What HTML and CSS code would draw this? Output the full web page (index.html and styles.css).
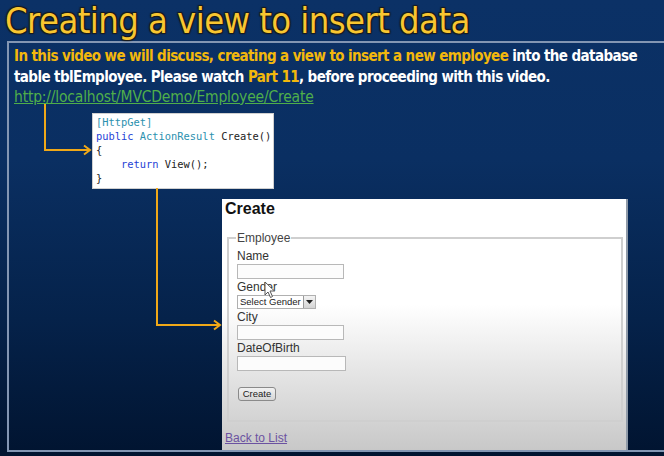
FILE: index.html
```html
<!DOCTYPE html>
<html>
<head>
<meta charset="utf-8">
<link rel="stylesheet" href="styles.css">
</head>
<body>
<h1 class="title">Creating a view to insert data</h1>
<div class="frame">
  <p class="intro"><span class="gold">In this video we will discuss, creating a view to insert a new employee</span> into the database<br>table tblEmployee. Please watch <span class="gold">Part 11</span>, before proceeding with this video.<br><a class="url" href="#">http://localhost/MVCDemo/Employee/Create</a></p>
  <div class="code"><div><span class="t">[HttpGet]</span></div><div><span class="k">public</span> <span class="t">ActionResult</span> Create()</div><div>{</div><div>    <span class="k">return</span> View();</div><div>}</div></div>
  <div class="browser">
    <h2 class="b-title">Create</h2>
    <fieldset class="fs">
      <legend class="lg">Employee</legend>
      <div class="lbl first">Name</div>
      <div class="inp"></div>
      <div class="lbl">Gender</div>
      <div class="sel"><span class="sel-txt">Select Gender</span><span class="sel-btn"><svg width="7" height="4" viewBox="0 0 7 4"><path d="M0 0H7L3.5 4Z" fill="#222"/></svg></span></div>
      <div class="lbl">City</div>
      <div class="inp"></div>
      <div class="lbl">DateOfBirth</div>
      <div class="inp wide"></div>
      <div class="btn">Create</div>
    </fieldset>
    <a class="back" href="#">Back to List</a>
  </div>
</div>
<svg class="wires" width="664" height="456" viewBox="0 0 664 456">
  <g fill="none" stroke="#f0a818" stroke-width="2">
    <path d="M45 104V150H89"/>
    <path d="M84 145.5L90 150L84 154.5"/>
    <path d="M157 188V325H219"/>
    <path d="M214 320.5L220 325L214 329.5"/>
  </g>
</svg>
<svg class="cursor" width="12" height="18" viewBox="0 0 12 18">
  <path d="M1 1V14L4 11L6.5 16.5L8.5 15.5L6 10H10.5Z" fill="#fff" stroke="#555" stroke-width="1"/>
</svg>
</body>
</html>
```
FILE: styles.css
```css
html, body {
  margin: 0;
  padding: 0;
}
body {
  width: 664px;
  height: 456px;
  overflow: hidden;
  position: relative;
  background: linear-gradient(180deg, #0b3166 0%, #0a2f62 35%, #05224a 70%, #011430 100%);
  font-family: "Liberation Sans", Arial, sans-serif;
}
.title {
  margin: 0;
  height: 41px;
  padding-left: 5px;
  font-family: "DejaVu Sans Condensed", "DejaVu Sans", sans-serif;
  font-stretch: condensed;
  font-weight: normal;
  font-size: 36px;
  letter-spacing: -0.55px;
  line-height: 42px;
  color: #f8c630;
  text-shadow: 1px 1px 1px #1a1a1a, -1px -1px 1px #1a1a1a, 1px -1px 1px #1a1a1a, -1px 1px 1px #1a1a1a;
  white-space: nowrap;
}
.frame {
  margin-left: 7px;
  height: 407px;
  border: 2px solid #8396b3;
  border-right: none;
  overflow: hidden;
}
.intro {
  margin: 0;
  padding: 3px 0 0 5px;
  font-family: "DejaVu Sans Condensed", "DejaVu Sans", sans-serif;
  font-stretch: condensed;
  font-weight: bold;
  font-size: 15px;
  letter-spacing: -0.6px;
  line-height: 20.5px;
  color: #ffffff;
  white-space: nowrap;
}
.gold {
  color: #f3b80c;
}
.url {
  color: #4fae4a;
  font-weight: normal;
  font-size: 15.5px;
  letter-spacing: -0.2px;
  text-decoration: underline;
}
.code {
  margin: 5px 0 0 83px;
  width: 177px;
  height: 71px;
  padding: 1px 0 2px 3px;
  background: #ffffff;
  border: 1px solid #d0d0d0;
  font-family: "DejaVu Sans Mono", monospace;
  font-size: 10.4px;
  line-height: 14.2px;
  color: #222;
  white-space: pre;
}
.t { color: #2b91af; }
.k { color: #1f3fd6; }
.browser {
  margin: 10px 0 0 213px;
  height: 251px;
  padding-left: 3px;
  background: linear-gradient(180deg, #ffffff 0%, #ffffff 42%, #e6e6e6 68%, #c8c8c8 100%);
  border-right: 2px solid #8f9aa8;
  box-sizing: border-box;
  width: 406px;
  display: flex;
  flex-direction: column;
  color: #333;
}
.b-title {
  margin: 0;
  font-size: 16px;
  font-weight: bold;
  line-height: 19px;
  color: #111;
}
.fs {
  margin: 14px 0 0 2px;
  width: 396px;
  height: 190px;
  box-sizing: border-box;
  border: 2px solid #cfcfcf;
  padding: 0 0 0 8px;
  display: flex;
  flex-direction: column;
  align-items: flex-start;
}
.lg {
  font-size: 12px;
  line-height: 13px;
  color: #444;
  padding: 0 1px;
  margin-left: -1px;
}
.lbl {
  font-size: 12px;
  line-height: 15px;
  color: #333;
  margin-top: 1px;
}
.lbl.first {
  margin-top: 4px;
}
.inp {
  width: 107px;
  height: 15px;
  box-sizing: border-box;
  border: 1px solid #b8b8b8;
  background: #fcfcfc;
}
.inp.wide {
  width: 109px;
}
.sel {
  display: flex;
  align-items: stretch;
  height: 14px;
  border: 1px solid #b0b0b0;
  box-sizing: border-box;
  background: #fff;
}
.sel-txt {
  font-size: 9.5px;
  line-height: 12px;
  padding: 0 2px;
  color: #222;
}
.sel-btn {
  width: 11px;
  border-left: 1px solid #999;
  background: linear-gradient(#f4f4f4, #d4d4d4);
  display: flex;
  align-items: center;
  justify-content: center;
}
.btn {
  margin-top: 16px;
  margin-left: 1px;
  width: 38px;
  height: 14px;
  box-sizing: border-box;
  border: 1px solid #8a8a8a;
  border-radius: 3px;
  background: linear-gradient(#f2f2f2, #d6d6d6);
  font-size: 9.5px;
  line-height: 12px;
  text-align: center;
  color: #222;
}
.back {
  margin-top: 9px;
  font-size: 12px;
  line-height: 14px;
  color: #6b52a1;
  text-decoration: underline;
  align-self: flex-start;
}
.wires {
  position: absolute;
  left: 0;
  top: 0;
  pointer-events: none;
}
.cursor {
  position: absolute;
  left: 264px;
  top: 281px;
}
```
